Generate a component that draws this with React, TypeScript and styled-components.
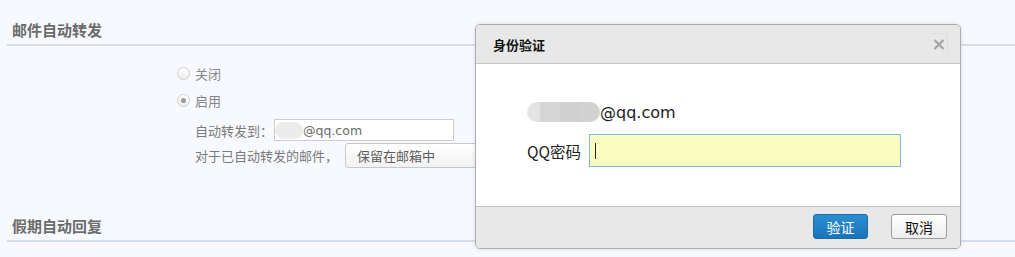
import React from 'react'
import styled, { createGlobalStyle } from 'styled-components'

const cjk = `"Noto Sans CJK SC", "Noto Sans", sans-serif`
const latin = `"DejaVu Sans", "Noto Sans CJK SC", sans-serif`

const GlobalStyle = createGlobalStyle`
  html, body {
    margin: 0;
    padding: 0;
    background: #f7f9fe;
  }
  body {
    font-family: ${cjk};
  }
  * {
    box-sizing: border-box;
  }
`

export default function App() {
  return (
    <>
      <GlobalStyle />
      <Page>
        <Section>
          <SectionHeader>邮件自动转发</SectionHeader>
          <FormBody>
            <RadioRow>
              <Radio />
              <RadioLabel>关闭</RadioLabel>
            </RadioRow>
            <RadioRow $gap={7}>
              <Radio $checked />
              <RadioLabel>启用</RadioLabel>
            </RadioRow>
            <FieldRow $gap={9}>
              <FieldLabel>自动转发到：</FieldLabel>
              <TextInput>
                <Blur $width={28} $height={17} />
                <InputText>@qq.com</InputText>
              </TextInput>
            </FieldRow>
            <FieldRow $gap={2}>
              <FieldLabel>对于已自动转发的邮件，</FieldLabel>
              <Select>保留在邮箱中</Select>
            </FieldRow>
          </FormBody>
        </Section>
        <Section $next>
          <SectionHeader>假期自动回复</SectionHeader>
        </Section>

        <Dialog>
          <DialogHeader>
            <DialogTitle>身份验证</DialogTitle>
            <CloseButton aria-label="close">
              <svg width="12" height="11" viewBox="0 0 12 11">
                <path d="M1.5 1 L10.5 10 M10.5 1 L1.5 10" stroke="#a3a3a3" strokeWidth="2.2" />
              </svg>
            </CloseButton>
          </DialogHeader>
          <DialogBody>
            <EmailLine>
              <Blur $width={73} $height={20} $dark />
              <span>@qq.com</span>
            </EmailLine>
            <PasswordRow>
              <PasswordLabel>QQ密码</PasswordLabel>
              <PasswordField>
                <Caret />
              </PasswordField>
            </PasswordRow>
          </DialogBody>
          <DialogFooter>
            <Button $primary>验证</Button>
            <Button>取消</Button>
          </DialogFooter>
        </Dialog>
      </Page>
    </>
  )
}

const Page = styled.div`
  position: relative;
  width: 1015px;
  height: 257px;
  overflow: hidden;
  background: #f7f9fe;
`

const Section = styled.section<{ $next?: boolean }>`
  margin-left: 7px;
  margin-top: ${p => (p.$next ? 28 : 0)}px;
`

const SectionHeader = styled.h2`
  margin: 0;
  padding: 20px 0 4px 5px;
  font-family: ${cjk};
  font-size: 15px;
  line-height: 20px;
  font-weight: 700;
  color: #6b6b6b;
  border-bottom: 2px solid #d5e0ee;
`

const FormBody = styled.div`
  display: flex;
  flex-direction: column;
  padding: 17px 0 0 170px;
`

const RadioRow = styled.label<{ $gap?: number }>`
  display: flex;
  align-items: center;
  gap: 5px;
  height: 20px;
  margin-top: ${p => p.$gap ?? 0}px;
`

const Radio = styled.span<{ $checked?: boolean }>`
  position: relative;
  width: 13px;
  height: 13px;
  border-radius: 50%;
  border: 1px solid #cfcfcf;
  background: linear-gradient(#ffffff, #ececec);
  &::after {
    content: '';
    display: ${p => (p.$checked ? 'block' : 'none')};
    position: absolute;
    left: 3px;
    top: 3px;
    width: 5px;
    height: 5px;
    border-radius: 50%;
    background: #9a9a9a;
  }
`

const RadioLabel = styled.span`
  font-size: 13px;
  color: #858585;
`

const FieldRow = styled.div<{ $gap?: number }>`
  display: flex;
  align-items: center;
  padding-left: 18px;
  margin-top: ${p => p.$gap ?? 0}px;
`

const FieldLabel = styled.span`
  font-size: 13px;
  color: #7a7a7a;
  white-space: nowrap;
`

const TextInput = styled.div`
  display: flex;
  align-items: center;
  width: 180px;
  height: 22px;
  margin-left: 1px;
  border: 1px solid #cdcdcd;
  background: #fff;
`

const InputText = styled.span`
  font-family: ${latin};
  font-size: 12.5px;
  color: #6a6a6a;
`

const Blur = styled.span<{ $width: number; $height: number; $dark?: boolean }>`
  display: inline-block;
  width: ${p => p.$width}px;
  height: ${p => p.$height}px;
  border-radius: ${p => p.$height / 2}px;
  background: ${p =>
    p.$dark
      ? 'linear-gradient(90deg, #e4e4e4 0%, #e4e4e4 18%, #d6d6d6 18%, #d6d6d6 45%, #cfcfcf 45%, #cfcfcf 72%, #d2d2d2 72%, #d2d2d2 100%)'
      : '#ececec'};
  filter: blur(0.6px);
`

const Select = styled.div`
  display: flex;
  align-items: center;
  width: 170px;
  height: 25px;
  margin-left: 7px;
  padding-left: 11px;
  border: 1px solid #c8c8c8;
  border-radius: 3px;
  background: linear-gradient(#ffffff, #f2f2f2);
  font-size: 13px;
  color: #5c5c5c;
`

const Dialog = styled.div`
  position: absolute;
  left: 475px;
  top: 24px;
  width: 486px;
  height: 225px;
  display: flex;
  flex-direction: column;
  border: 1px solid #acacac;
  border-radius: 5px;
  overflow: hidden;
  background: #fff;
  box-shadow: 0 0 4px rgba(0, 0, 0, 0.12);
`

const DialogHeader = styled.div`
  display: flex;
  align-items: center;
  justify-content: space-between;
  height: 39px;
  padding: 0 12px 0 17px;
  background: #e8e8e8;
  border-bottom: 1px solid #c6c6c6;
`

const DialogTitle = styled.h3`
  margin: 0;
  font-family: ${cjk};
  font-size: 13px;
  font-weight: 700;
  color: #111;
`

const CloseButton = styled.button`
  display: flex;
  align-items: center;
  justify-content: center;
  width: 17px;
  height: 22px;
  padding: 0;
  border: none;
  border-top: 1px solid #dedede;
  border-right: 1px solid #dedede;
  background: transparent;
`

const DialogBody = styled.div`
  flex: 1;
  display: flex;
  flex-direction: column;
  padding: 37px 0 0 51px;
  background: #fff;
`

const EmailLine = styled.div`
  display: flex;
  align-items: center;
  height: 22px;
  font-family: ${latin};
  font-size: 16px;
  color: #222;
`

const PasswordRow = styled.div`
  display: flex;
  align-items: center;
  gap: 8px;
  margin-top: 11px;
`

const PasswordLabel = styled.span`
  font-family: ${cjk};
  font-size: 15.5px;
  color: #222;
`

const PasswordField = styled.div`
  display: flex;
  align-items: center;
  width: 312px;
  height: 33px;
  padding-left: 5px;
  border: 1px solid #80b6e6;
  background: #fafcc2;
`

const Caret = styled.span`
  width: 1px;
  height: 16px;
  background: #222;
`

const DialogFooter = styled.div`
  display: flex;
  justify-content: flex-end;
  gap: 23px;
  height: 42px;
  padding: 7px 13px 0 0;
  background: #e8e8e8;
  border-top: 1px solid #c6c6c6;
`

const Button = styled.button<{ $primary?: boolean }>`
  width: ${p => (p.$primary ? 55 : 56)}px;
  height: 25px;
  padding: 0;
  border-radius: 3px;
  font-family: ${cjk};
  font-size: 14px;
  border: 1px solid ${p => (p.$primary ? '#1c6aa8' : '#9d9d9d')};
  color: ${p => (p.$primary ? '#fff' : '#111')};
  background: ${p =>
    p.$primary
      ? 'linear-gradient(#2a8dd2, #1b74b8)'
      : 'linear-gradient(#ffffff, #eeeeee)'};
`
